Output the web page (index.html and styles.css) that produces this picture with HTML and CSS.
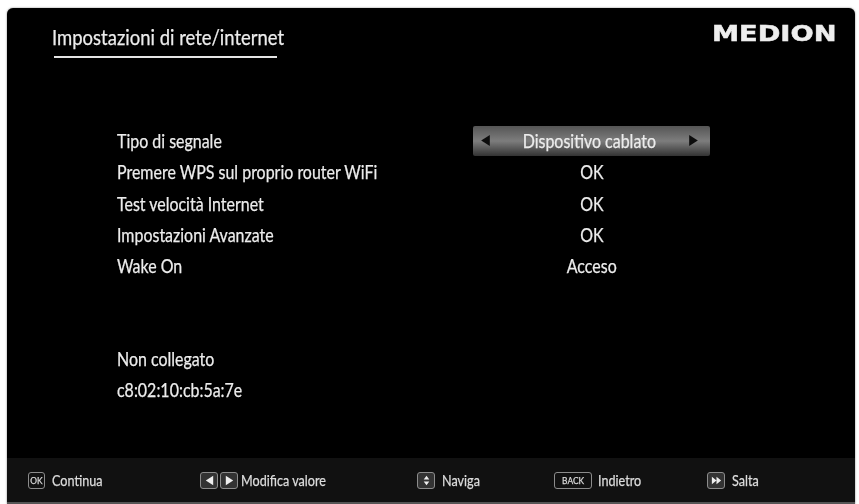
FILE: index.html
```html
<!DOCTYPE html>
<html lang="it">
<head>
<meta charset="utf-8">
<title>Impostazioni di rete/internet</title>
<link rel="stylesheet" href="styles.css">
</head>
<body>
<div class="tv">
  <header class="top">
    <div class="title-wrap">
      <h1 class="title"><span class="tx">Impostazioni di rete/internet</span></h1>
      <div class="title-rule"></div>
    </div>
    <div class="logo">MEDION</div>
  </header>
  <main class="content">
    <div class="rows">
      <div class="row"><span class="label"><span class="tx">Tipo di segnale</span></span>
        <span class="value selected">
          <svg class="tri" viewBox="0 0 10 12"><path d="M9 1v10L1 6z"/></svg>
          <span class="tx-c">Dispositivo cablato</span>
          <svg class="tri" viewBox="0 0 10 12"><path d="M1 1v10l8-5z"/></svg>
        </span></div>
      <div class="row"><span class="label"><span class="tx">Premere WPS sul proprio router WiFi</span></span><span class="value"><span class="tx-c">OK</span></span></div>
      <div class="row"><span class="label"><span class="tx">Test velocità Internet</span></span><span class="value"><span class="tx-c">OK</span></span></div>
      <div class="row"><span class="label"><span class="tx">Impostazioni Avanzate</span></span><span class="value"><span class="tx-c">OK</span></span></div>
      <div class="row"><span class="label"><span class="tx">Wake On</span></span><span class="value"><span class="tx-c">Acceso</span></span></div>
    </div>
    <div class="status">
      <div class="status-line"><span class="tx">Non collegato</span></div>
      <div class="status-line"><span class="tx">c8:02:10:cb:5a:7e</span></div>
    </div>
  </main>
  <footer class="bar">
    <div class="hint h1"><span class="key key-ok"><span class="tx-c">OK</span></span><span class="tx">Continua</span></div>
    <div class="hint h2">
      <span class="key key-icon"><svg viewBox="0 0 14 14"><path d="M11 2v10L3 7z"/></svg></span>
      <span class="key key-icon"><svg viewBox="0 0 14 14"><path d="M3 2v10l8-5z"/></svg></span>
      <span class="tx gap3">Modifica valore</span>
    </div>
    <div class="hint h3"><span class="key key-icon"><svg viewBox="0 0 14 14"><path d="M7 2l3 4H4zM7 12l3-4H4z"/></svg></span><span class="tx">Naviga</span></div>
    <div class="hint h4"><span class="key key-back"><span class="tx-c">BACK</span></span><span class="tx">Indietro</span></div>
    <div class="hint h5"><span class="key key-icon"><svg viewBox="0 0 14 14"><path d="M2 3v8l5-4zM7 3v8l5-4z"/></svg></span><span class="tx">Salta</span></div>
  </footer>
</div>
</body>
</html>
```
FILE: styles.css
```css
html, body { margin: 0; padding: 0; background: #fff; }
body { width: 859px; height: 504px; overflow: hidden; padding: 8px 4px 0 7px; box-sizing: border-box; }
.tv {
  width: 848px; height: 496px; background: #000; border-radius: 6px 6px 0 0;
  color: #ececec; display: flex; flex-direction: column;
  font-family: Lato, "Liberation Sans", sans-serif;
  -webkit-text-stroke: 0.25px currentColor;
  box-shadow: 0 0 2px #777; filter: blur(0.35px); overflow: hidden;
}
.tx, .tx-c { display: inline-block; white-space: nowrap; transform: scaleX(0.84); }
.tx { transform-origin: left center; }
.tx-c { transform-origin: center; }
.top { display: flex; justify-content: space-between; align-items: flex-start; height: 100px; padding: 16px 19px 0 45px; box-sizing: border-box; }
.title { margin: 0; font-size: 22px; font-weight: normal; line-height: 26px; }
.title-rule { height: 2px; background: #e4e4e4; margin: 6px 0 0 2px; width: 223px; }
.logo { font-family: "DejaVu Sans", sans-serif; font-weight: bold; font-size: 22px; line-height: 22px; margin-top: -1px; color: #eee; -webkit-text-stroke: 0.5px #eee; transform: scaleX(1.24); transform-origin: right; }
.content { flex: 1; display: flex; flex-direction: column; padding-left: 110px; }
.rows { margin-top: 17px; }
.row { display: flex; height: 31.3px; align-items: center; font-size: 19px; }
.label { width: 356px; }
.value { width: 237px; text-align: center; }
.selected {
  height: 30px; display: flex; align-items: center; justify-content: space-between; padding: 0 11px 0 7px; box-sizing: border-box;
  background: linear-gradient(#555, #7d7d7d 50%, #333); border-radius: 2px;
}
.tri { width: 11px; height: 13px; fill: #0c0c0c; }
.status { margin-top: 62px; font-size: 19px; }
.status-line { height: 31px; line-height: 31px; }
.bar { height: 46px; background: #111; border-bottom: 2px solid #555; display: flex; align-items: center; font-size: 15px; box-sizing: border-box; color: #ddd; }
.hint { display: flex; align-items: center; gap: 7px; }
.h1 { margin-left: 21px; width: 172px; }
.h2 { width: 217px; gap: 2px; }
.h2 .gap3 { margin-left: 1px; }
.h3 { width: 137px; }
.h4 { width: 153px; gap: 6px; }
.key { border: 1px solid #8c8c8c; border-radius: 3px; height: 17px; box-sizing: border-box; display: flex; align-items: center; justify-content: center; }
.key-ok { width: 17px; font-size: 10px; }
.key-back { width: 38px; font-size: 10px; }
.key-icon { width: 18px; background: #333; }
.key-icon svg { width: 13px; height: 13px; fill: #eee; }
```
